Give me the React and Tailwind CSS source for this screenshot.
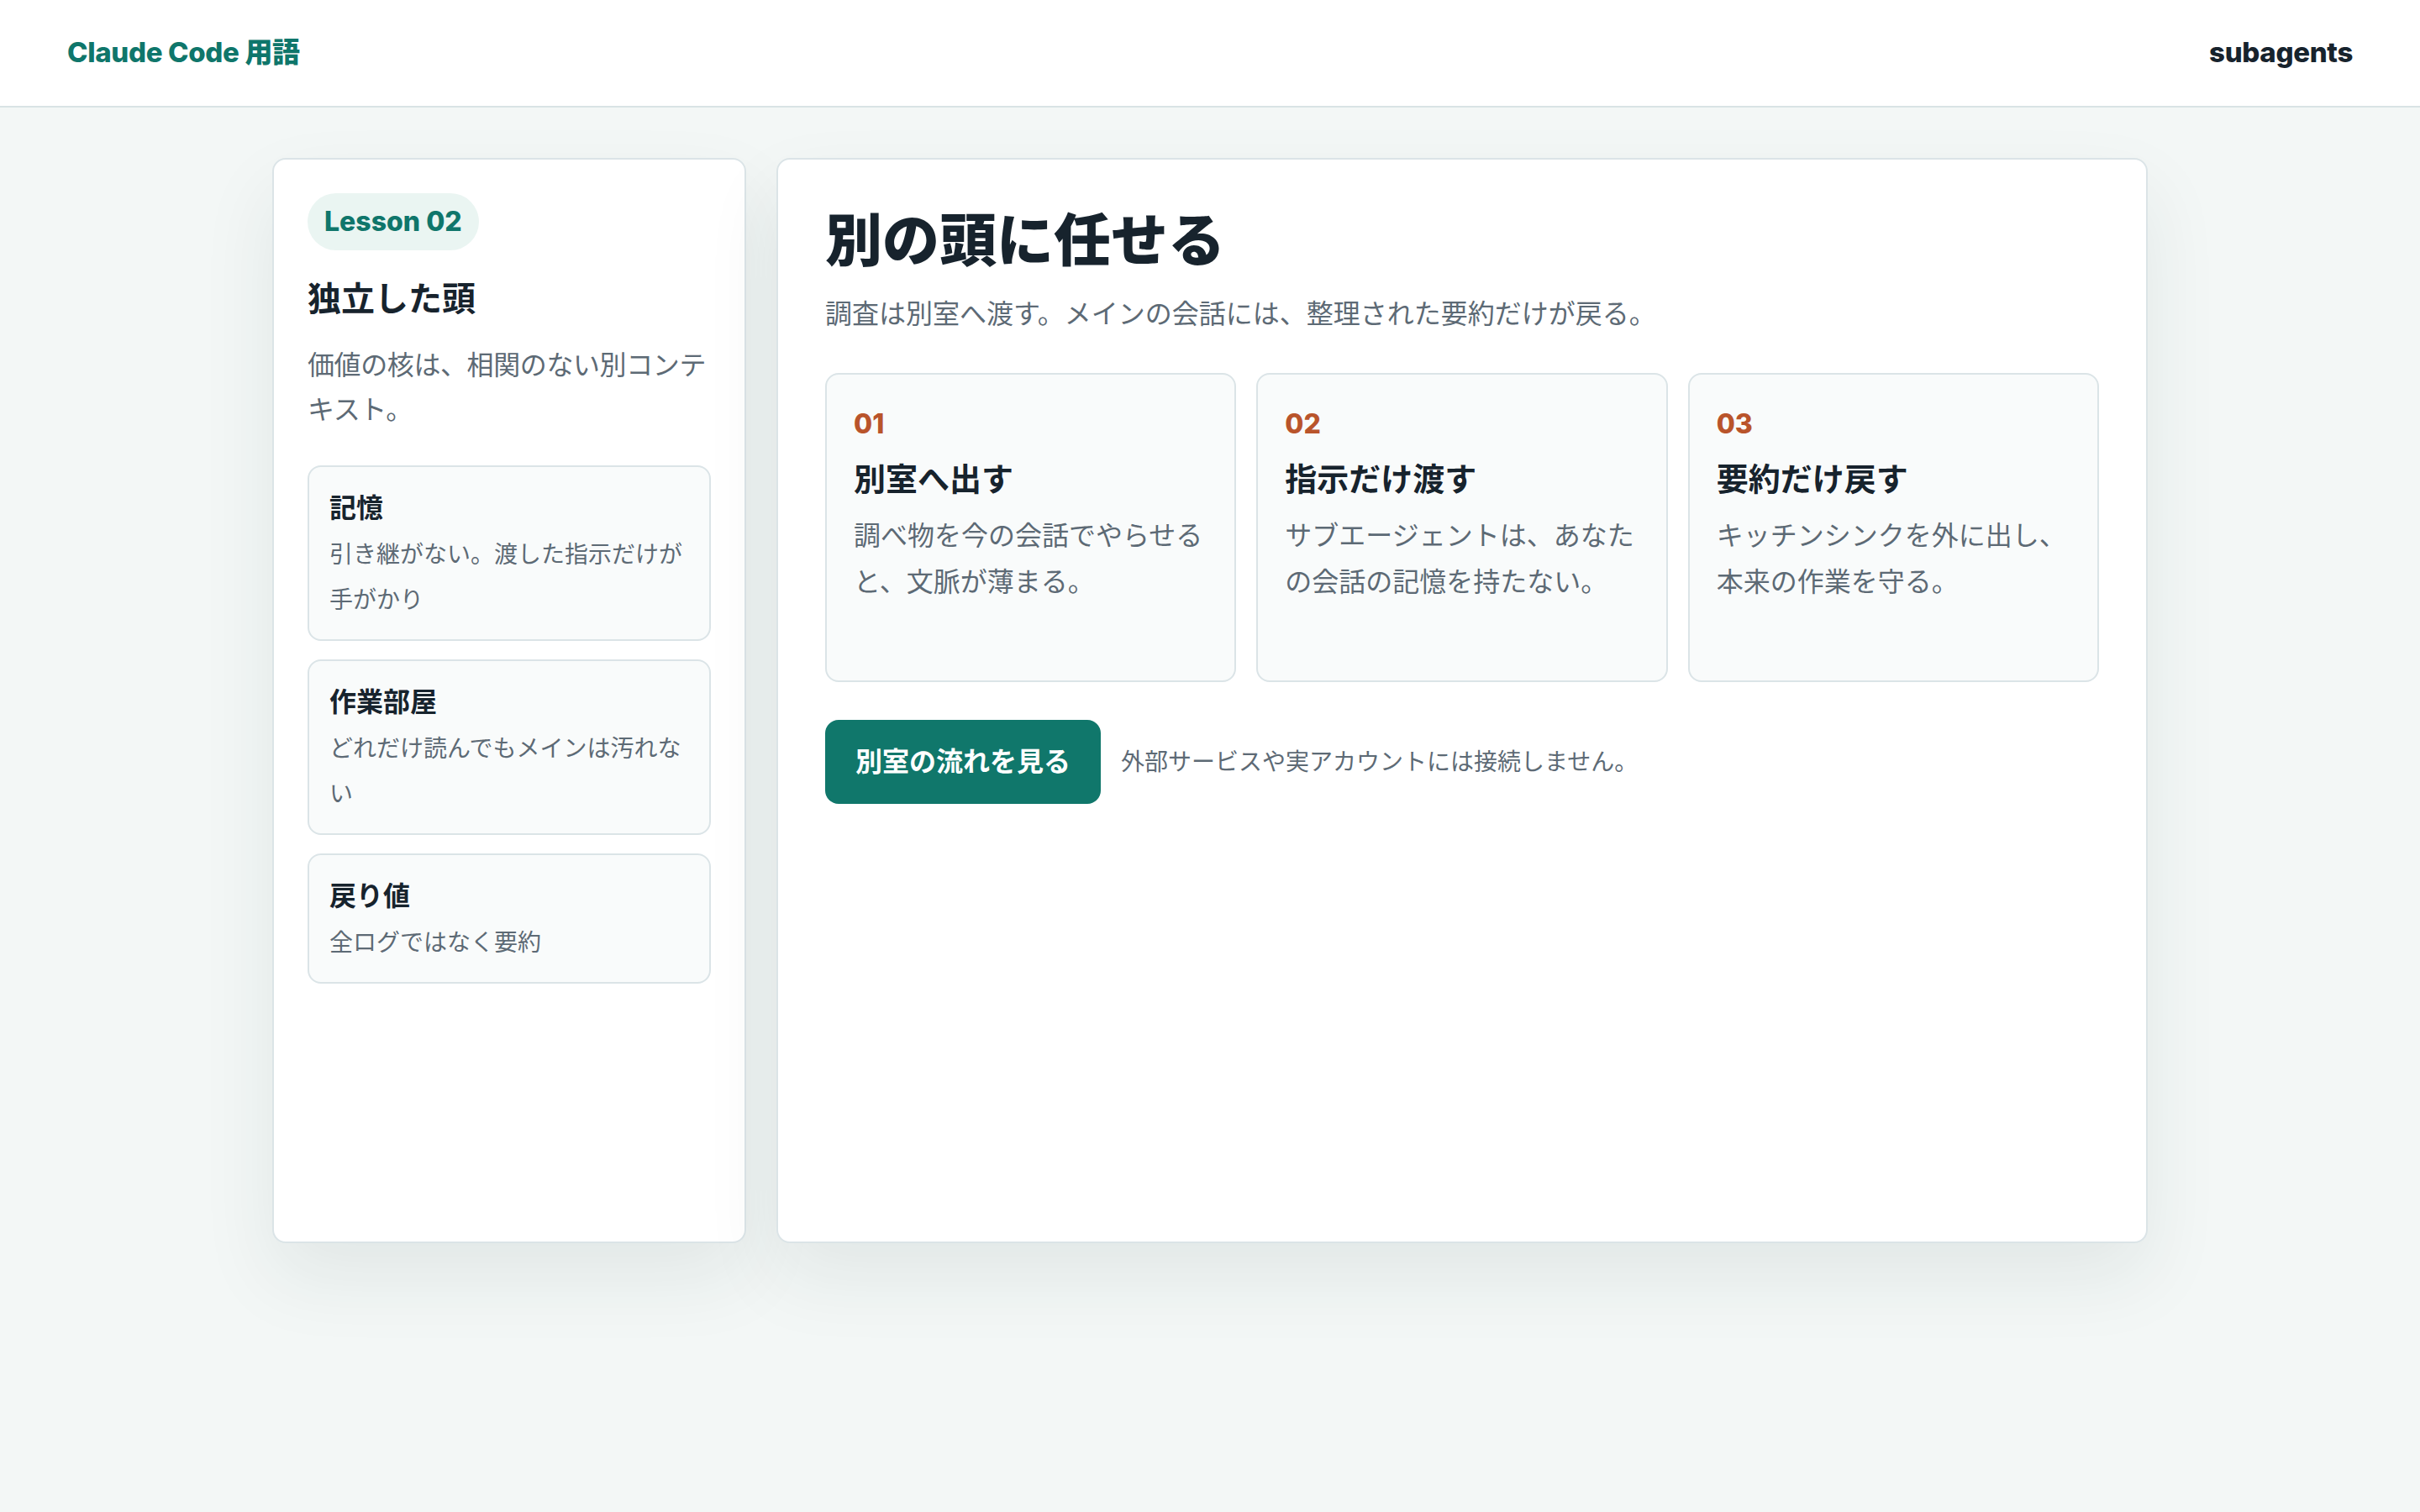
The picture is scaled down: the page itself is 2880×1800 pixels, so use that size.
import React from "react";

const FONT = { fontFamily: 'Inter, "Noto Sans CJK JP", "Noto Sans", sans-serif' };

const items = [
  { t: "記憶", d: "引き継がない。渡した指示だけが手がかり" },
  { t: "作業部屋", d: "どれだけ読んでもメインは汚れない" },
  { t: "戻り値", d: "全ログではなく要約" },
];

const steps = [
  { n: "01", t: "別室へ出す", d: "調べ物を今の会話でやらせると、文脈が薄まる。" },
  { n: "02", t: "指示だけ渡す", d: "サブエージェントは、あなたの会話の記憶を持たない。" },
  { n: "03", t: "要約だけ戻す", d: "キッチンシンクを外に出し、本来の作業を守る。" },
];

export default function App() {
  return (
    <div className="min-h-screen bg-[#f3f7f6] text-[#17232d]" style={FONT}>
      <header className="h-[128px] bg-white border-b-2 border-[#d9e3e5] flex items-center justify-between px-20">
        <div className="text-[33px] font-extrabold text-[#0f766b] tracking-[-0.01em]">Claude Code 用語</div>
        <div className="text-[33px] font-extrabold text-[#17232d] tracking-[-0.01em]">subagents</div>
      </header>

      <main className="w-[2232px] mx-auto pt-[60px] pb-20 grid grid-cols-[564px_1fr] gap-[36px]">
        <aside className="min-h-[1292px] bg-white border-2 border-[#dbe4e7] rounded-2xl p-10 shadow-[0_40px_90px_rgba(20,50,50,0.08)]">
          <div className="inline-flex items-center h-[68px] px-[20px] rounded-full bg-[#eaf5f2] text-[#0f766b] text-[32px] font-extrabold">
            Lesson 02
          </div>
          <h2 className="mt-[32px] text-[40px] leading-[52px] font-bold text-[#17232d]">独立した頭</h2>
          <p className="mt-[26px] text-[32px] leading-[53px] tracking-[-0.4px] text-[#5d6a75]">価値の核は、相関のない別コンテキスト。</p>
          <div className="mt-10 flex flex-col gap-[22px]">
            {items.map((it) => (
              <div key={it.t} className="border-2 border-[#dbe4e7] rounded-2xl bg-[#f9fbfb] px-6 pt-[25px] pb-[20px]">
                <div className="text-[32px] leading-[48px] font-bold text-[#17232d]">{it.t}</div>
                <div className="mt-[4px] text-[28px] leading-[54px] text-[#5d6a75]">{it.d}</div>
              </div>
            ))}
          </div>
        </aside>

        <section className="min-h-[1292px] bg-white border-2 border-[#dbe4e7] rounded-2xl px-14 pt-[58px] pb-14 shadow-[0_40px_90px_rgba(20,50,50,0.08)]">
          <h1 className="text-[68px] leading-[76px] font-extrabold text-[#17232d]">別の頭に任せる</h1>
          <p className="mt-6 text-[32px] leading-[52px] text-[#5d6a75]">
            調査は別室へ渡す。メインの会話には、整理された要約だけが戻る。
          </p>
          <div className="mt-[44px] grid grid-cols-3 gap-6">
            {steps.map((s) => (
              <div key={s.n} className="min-h-[368px] border-2 border-[#dbe4e7] rounded-2xl bg-[#f9fbfb] px-8 pt-[34px] pb-8">
                <div className="text-[32px] leading-[50px] font-extrabold text-[#b9542b]">{s.n}</div>
                <div className="mt-[12px] text-[38px] leading-[56px] font-bold text-[#17232d]">{s.t}</div>
                <div className="mt-[12px] text-[32px] leading-[55px] text-[#5d6a75]">{s.d}</div>
              </div>
            ))}
          </div>
          <div className="mt-[45px] flex items-center gap-6">
            <button className="h-[100px] px-[36px] rounded-2xl bg-[#10776b] text-white text-[32px] font-bold">
              別室の流れを見る
            </button>
            <span className="text-[28px] text-[#5d6a75]">外部サービスや実アカウントには接続しません。</span>
          </div>
        </section>
      </main>
    </div>
  );
}
